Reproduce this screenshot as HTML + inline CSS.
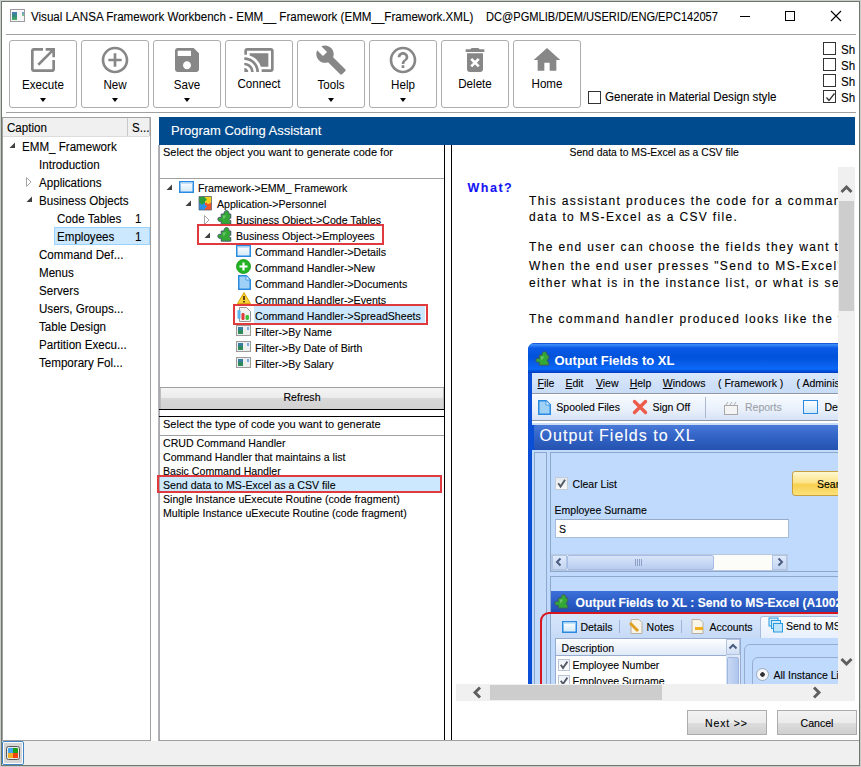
<!DOCTYPE html>
<html><head><meta charset="utf-8">
<style>
*{box-sizing:border-box;margin:0;padding:0}
html,body{width:861px;height:767px;overflow:hidden;background:#fff}
body{position:relative;font-family:"Liberation Sans",sans-serif;color:#000}
.a{position:absolute}
.t{position:absolute;white-space:nowrap;line-height:1;-webkit-text-stroke-width:0.1px}
.s{font-size:12.3px;transform:scaleX(0.943);transform-origin:0 0;margin-top:0px}
.m{font-size:10.6px}
.hl{position:absolute;height:1px}
.vl{position:absolute;width:1px}
.btn{position:absolute;top:40px;width:68px;height:68px;border:1px solid #adadad;border-radius:3px;background:#fff}
.btn .lb{position:absolute;left:0;right:0;text-align:center;font-size:12.3px;line-height:1;transform:scaleX(0.943);margin-top:0px}
.btn .ar{position:absolute;left:29.5px;top:57px;width:0;height:0;border-left:3.5px solid transparent;border-right:3.5px solid transparent;border-top:4px solid #000}
.btn svg{position:absolute;left:17px;top:2.7px}
.cb{position:absolute;width:13px;height:13px;border:1px solid #333;background:#fff}
.tri{position:absolute}
</style></head><body>

<!-- window frame -->
<div class="a" style="left:0;top:0;width:861px;height:767px;border:1px solid #cbcbcb"></div>
<div class="a" style="left:1px;top:1px;width:859px;height:765px;border:1px solid #6c7a6e"></div>

<!-- title bar -->
<div class="a" style="left:10px;top:9px;width:15px;height:13px;border:1px solid #9c9ca0;background:#f6f6f6">
  <div class="a" style="left:1px;top:2px;width:5px;height:8px;background:linear-gradient(#4a7cc0,#2f8a7a 50%,#4cb060)"></div>
  <div class="a" style="left:11px;top:2px;width:2px;height:4px;background:linear-gradient(#6a9ad8,#7cc87c)"></div>
</div>
<div class="t s" style="left:31px;top:11px">Visual LANSA Framework Workbench - EMM__ Framework (EMM__Framework.XML)</div>
<div class="t" style="left:486px;top:11px;font-size:12.3px;transform:scaleX(0.902);transform-origin:0 0">DC@PGMLIB/DEM/USERID/ENG/EPC142057</div>
<div class="hl" style="left:740px;top:16px;width:10px;background:#000"></div>
<div class="a" style="left:785px;top:11px;width:10px;height:10px;border:1px solid #000"></div>
<svg class="a" style="left:830px;top:10px" width="12" height="12" viewBox="0 0 12 12"><path d="M1 1L11 11M11 1L1 11" stroke="#000" stroke-width="1.1" fill="none"/></svg>
<div class="hl" style="left:6px;top:34px;width:850px;background:#a0a0a0"></div>

<!-- toolbar buttons -->
<div class="btn" style="left:9px"><svg width="32" height="32" viewBox="0 0 24 24"><path fill="#878787" d="M19 19H5V5h7V3H5c-1.11 0-2 .9-2 2v14c0 1.1.89 2 2 2h14c1.1 0 2-.9 2-2v-7h-2v7zM14 3v2h3.59l-9.83 9.830 1.41 1.41L19 6.41V10h2V3h-7z"/></svg><div class="lb" style="top:38px">Execute</div><div class="ar"></div></div>
<div class="btn" style="left:81px"><svg width="32" height="32" viewBox="0 0 24 24"><path fill="#878787" d="M13 7h-2v4H7v2h4v4h2v-4h4v-2h-4V7zm-1-5C6.48 2 2 6.480 2 12s4.48 10 10 10 10-4.48 10-10S17.52 2 12 2zm0 18c-4.41 0-8-3.59-8-8s3.59-8 8-8 8 3.59 8 8-3.59 8-8 8z"/></svg><div class="lb" style="top:38px">New</div><div class="ar"></div></div>
<div class="btn" style="left:153px"><svg width="32" height="32" viewBox="0 0 24 24"><path fill="#878787" d="M17 3H5c-1.11 0-2 .9-2 2v14c0 1.1.89 2 2 2h14c1.1 0 2-.9 2-2V7l-4-4zm-5 16c-1.66 0-3-1.34-3-3s1.34-3 3-3 3 1.34 3 3-1.34 3-3 3zm3-10H5V5h10v4z"/></svg><div class="lb" style="top:38px">Save</div><div class="ar"></div></div>
<div class="btn" style="left:225px"><svg width="32" height="32" viewBox="0 0 24 24"><path fill="#878787" d="M1 18v3h3c0-1.66-1.34-3-3-3zm0-4v2c2.76 0 5 2.24 5 5h2c0-3.87-3.13-7-7-7zm18-7H5v1.63c3.96 1.28 7.09 4.410 8.37 8.37H19V7zM1 10v2c4.97 0 9 4.03 9 9h2c0-6.08-4.93-11-11-11zm20-7H3c-1.1 0-2 .9-2 2v3h2V5h18v14h-7v2h7c1.1 0 2-.9 2-2V5c0-1.1-.9-2-2-2z"/></svg><div class="lb" style="top:36.5px">Connect</div></div>
<div class="btn" style="left:297px"><svg width="32" height="32" viewBox="0 0 24 24"><path fill="#878787" d="M22.7 19l-9.1-9.1c.9-2.3.4-5-1.5-6.9-2-2-5-2.4-7.4-1.3L9 6 6 9 1.6 4.7C.4 7.1.9 10.1 2.9 12.1c1.9 1.9 4.6 2.4 6.9 1.5l9.1 9.1c.4.4 1 .4 1.4 0l2.3-2.3c.5-.4.5-1.1.1-1.4z"/></svg><div class="lb" style="top:38px">Tools</div><div class="ar"></div></div>
<div class="btn" style="left:369px"><svg width="32" height="32" viewBox="0 0 24 24"><path fill="#878787" d="M11 18h2v-2h-2v2zm1-16C6.48 2 2 6.48 2 12s4.48 10 10 10 10-4.48 10-10S17.52 2 12 2zm0 18c-4.41 0-8-3.59-8-8s3.59-8 8-8 8 3.59 8 8-3.59 8-8 8zm0-14c-2.21 0-4 1.79-4 4h2c0-1.1.9-2 2-2s2 .9 2 2c0 2-3 1.75-3 5h2c0-2.25 3-2.5 3-5 0-2.21-1.79-4-4-4z"/></svg><div class="lb" style="top:38px">Help</div><div class="ar"></div></div>
<div class="btn" style="left:441px"><svg width="32" height="32" viewBox="0 0 24 24"><path fill="#878787" d="M6 19c0 1.1.9 2 2 2h8c1.1 0 2-.9 2-2V7H6v12zm2.46-7.12l1.41-1.41L12 12.59l2.12-2.12 1.41 1.41L13.41 14l2.12 2.12-1.41 1.41L12 15.41l-2.12 2.12-1.41-1.41L10.59 14l-2.13-2.12zM15.5 4l-1-1h-5l-1 1H5v2h14V4z"/></svg><div class="lb" style="top:36.5px">Delete</div></div>
<div class="btn" style="left:513px"><svg width="32" height="32" viewBox="0 0 24 24"><path fill="#878787" d="M10 20v-6h4v6h5v-8h3L12 3 2 12h3v8z"/></svg><div class="lb" style="top:36.5px">Home</div></div>

<div class="hl" style="left:6px;top:112px;width:850px;background:#a0a0a0"></div>

<!-- material checkbox + right checkboxes -->
<div class="cb" style="left:588px;top:91px"></div>
<div class="t s" style="left:605px;top:91px">Generate in Material Design style</div>
<div class="cb" style="left:823px;top:42px"></div><div class="t s" style="left:841px;top:44px">Sh</div>
<div class="cb" style="left:823px;top:58px"></div><div class="t s" style="left:841px;top:60px">Sh</div>
<div class="cb" style="left:823px;top:74px"></div><div class="t s" style="left:841px;top:76px">Sh</div>
<div class="cb" style="left:823px;top:90px"><svg class="a" style="left:1px;top:1px" width="11" height="11" viewBox="0 0 11 11"><path d="M1.5 5.5L4 8.5L9.5 1.5" stroke="#333" stroke-width="1.3" fill="none"/></svg></div><div class="t s" style="left:841px;top:92px">Sh</div>

<!-- left panel -->
<div class="a" style="left:2px;top:117px;width:149px;height:624px;border:1px solid #a0a0a0;border-right-color:#a0a0a0;background:#fff"></div>
<div class="a" style="left:3px;top:118px;width:146px;height:19px;background:#f0f0f0;border-bottom:1px solid #dcdcdc"></div>
<div class="vl" style="left:127px;top:118px;height:18px;background:#c8c8c8"></div>
<div class="vl" style="left:149px;top:118px;height:18px;background:#c8c8c8"></div>
<div class="t s" style="left:7px;top:122px">Caption</div>
<div class="t s" style="left:132px;top:122px">S...</div>
<div class="a" style="left:54px;top:227px;width:96px;height:18px;background:#cce8ff;border:1px solid #99d1ff"></div>
<svg class="a" style="left:9px;top:142px" width="7" height="7" viewBox="0 0 7 7"><path d="M6 0.5V6H0.5Z" fill="#404040"/></svg>
<div class="t s" style="left:22px;top:141px">EMM_ Framework</div>
<div class="t s" style="left:39px;top:159px">Introduction</div>
<svg class="a" style="left:26px;top:177px" width="6" height="10" viewBox="0 0 6 10"><path d="M0.5 0.5L5 5L0.5 9.5Z" fill="none" stroke="#a6a6a6"/></svg>
<div class="t s" style="left:39px;top:177px">Applications</div>
<svg class="a" style="left:26px;top:196px" width="7" height="7" viewBox="0 0 7 7"><path d="M6 0.5V6H0.5Z" fill="#404040"/></svg>
<div class="t s" style="left:39px;top:195px">Business Objects</div>
<div class="t s" style="left:57px;top:213px">Code Tables</div>
<div class="t s" style="left:135px;top:213px">1</div>
<div class="t s" style="left:57px;top:231px">Employees</div>
<div class="t s" style="left:135px;top:231px">1</div>
<div class="t s" style="left:39px;top:249px">Command Def...</div>
<div class="t s" style="left:39px;top:267px">Menus</div>
<div class="t s" style="left:39px;top:285px">Servers</div>
<div class="t s" style="left:39px;top:303px">Users, Groups...</div>
<div class="t s" style="left:39px;top:321px">Table Design</div>
<div class="t s" style="left:39px;top:339px">Partition Execu...</div>
<div class="t s" style="left:39px;top:357px">Temporary Fol...</div>

<!-- status bar -->
<div class="a" style="left:2px;top:741px;width:857px;height:24px;background:#f0f0f0"></div>
<div class="a" style="left:2px;top:741px;width:22px;height:24px;border:1.5px solid #3f84c6;border-radius:2px;background:#fff"></div>
<div class="a" style="left:4px;top:743px;width:18px;height:20px;background:#d6d6d6"></div>
<div class="a" style="left:6px;top:746px;width:14px;height:14px;border:1.5px solid #5a5a5a;border-radius:2.5px;background:#e8e8e8"></div>
<div class="a" style="left:8px;top:748px;width:5px;height:5px;background:#3ea6f4;border-radius:1px 0 0 0"></div>
<div class="a" style="left:13px;top:748px;width:5px;height:5px;background:#1ca01c;border-radius:0 1px 0 0"></div>
<div class="a" style="left:8px;top:753px;width:5px;height:5px;background:#f2b02a"></div>
<div class="a" style="left:13px;top:753px;width:5px;height:5px;background:#f2440e"></div>

<!-- blue header -->
<div class="a" style="left:159px;top:117px;width:696px;height:28px;background:#004b8e"></div>
<div class="t" style="left:171px;top:124px;font-size:13px;color:#fff">Program Coding Assistant</div>

<!-- middle panel -->
<div class="vl" style="left:159px;top:145px;height:595px;background:#a8a8ae"></div><div class="vl" style="left:158px;top:145px;height:595px;background:#b4b4b8"></div>
<div class="t" style="left:163px;top:147.2px;font-size:11px">Select the object you want to generate code for</div>
<div class="hl" style="left:159px;top:178px;width:286px;background:#a0a0a0"></div>
<svg width="0" height="0" style="position:absolute"><defs>
<linearGradient id="gwin" x1="0" y1="0" x2="0" y2="1"><stop offset="0" stop-color="#ffffff"/><stop offset="1" stop-color="#cfe8fa"/></linearGradient>
<symbol id="iwin" viewBox="0 0 15 12"><rect x="0.75" y="0.75" width="13.5" height="10.5" fill="url(#gwin)" stroke="#2a8ae0" stroke-width="1.5"/><rect x="1.5" y="1.5" width="12" height="1.5" fill="#bfe0f8"/></symbol>
<symbol id="ipuz" viewBox="0 0 15 15"><path d="M7 4C7 1.5 8.2.6 9.5.6S12 1.5 12 4H13.8V8.4C13.3 7.9 12.2 8 12.2 9.4S13.3 10.9 13.8 10.4V14.2H4.2V11C3.8 11.6 1 11.8.8 9.3C.6 7.3 3.2 6.8 4.2 7.8V4Z" fill="#34a834" stroke="#41506a" stroke-width="0.9"/><path d="M5.5 5.5h4l-3 4z" fill="#7ed27e" opacity="0.7"/></symbol>
<symbol id="iapp" viewBox="0 0 15 16"><path d="M1 1.5h6v6.5H1z" fill="#2e9e36"/><path d="M7 1h6.5v6.5H7z" fill="#f6d21c"/><path d="M1 8h6v7H1z" fill="#2a90ea"/><path d="M7 7.5h6.5V15H7z" fill="#f2542a"/><circle cx="7" cy="4.5" r="1.6" fill="#2e9e36"/><circle cx="10.3" cy="7.5" r="1.6" fill="#f6d21c"/><circle cx="4" cy="8" r="1.6" fill="#2e9e36"/><circle cx="7" cy="11.5" r="1.6" fill="#2a90ea"/><path d="M1 1.5h12.5V15H1z" fill="none" stroke="#5a6478" stroke-width="0.8" stroke-linejoin="round"/></symbol>
<symbol id="iplus" viewBox="0 0 15 15"><circle cx="7.5" cy="7.5" r="7" fill="#22b422" stroke="#179017" stroke-width="0.8"/><path d="M7.5 3.5v8M3.5 7.5h8" stroke="#fff" stroke-width="2.2"/></symbol>
<symbol id="idoc" viewBox="0 0 13 15"><path d="M0.75 0.75h7.5l4 4v9.5H0.75z" fill="#9fd0f6" stroke="#2a8ae0" stroke-width="1.5"/><path d="M8 1v4h4" fill="#e6f4fe" stroke="#2a8ae0" stroke-width="0.8"/></symbol>
<symbol id="iwarn" viewBox="0 0 14 12"><path d="M7 0.6L13.5 11.5H0.5z" fill="#f8d23a" stroke="#d9a000" stroke-width="0.9"/><path d="M7 4v4" stroke="#402000" stroke-width="1.6"/><rect x="6.2" y="9" width="1.6" height="1.5" fill="#402000"/></symbol>
<symbol id="isheet" viewBox="0 0 14 15"><path d="M2.5 .5h7l4 4v10h-11z" fill="#f2f2f2" stroke="#8a8a8a" stroke-width="0.9"/><rect x="0.5" y="3" width="3" height="9" rx="1.2" fill="#5ab4f0"/><rect x="4.5" y="6" width="3" height="7" rx="1.2" fill="#e03a3a"/><rect x="8.5" y="8" width="3.5" height="5" rx="1.4" fill="#3cc03c"/></symbol>
<symbol id="ifil" viewBox="0 0 15 11"><rect x="0.5" y="0.5" width="14" height="10" fill="#eeeeee" stroke="#9a9a9a"/><rect x="2" y="2" width="5" height="7" fill="#2f8a5a"/><rect x="2" y="2" width="5" height="3" fill="#3a78b8" opacity="0.8"/><rect x="11" y="2" width="2" height="3" fill="#7ab0e0"/></symbol>
</defs></svg>
<div class="a" style="left:254px;top:306px;width:171px;height:17px;background:#cce8ff"></div>
<svg class="a" style="left:166px;top:184px" width="7" height="7" viewBox="0 0 7 7"><path d="M6 0.5V6H0.5Z" fill="#404040"/></svg>
<svg class="a" style="left:179px;top:181px" width="15" height="12"><use href="#iwin"/></svg>
<div class="t m" style="left:198px;top:182.7px">Framework-&gt;EMM_ Framework</div>
<svg class="a" style="left:185px;top:200px" width="7" height="7" viewBox="0 0 7 7"><path d="M6 0.5V6H0.5Z" fill="#404040"/></svg>
<svg class="a" style="left:198px;top:195px" width="15" height="16"><use href="#iapp"/></svg>
<div class="t m" style="left:217px;top:198.7px">Application-&gt;Personnel</div>
<svg class="a" style="left:204px;top:215px" width="6" height="10" viewBox="0 0 6 10"><path d="M0.5 0.5L5 5L0.5 9.5Z" fill="none" stroke="#a6a6a6"/></svg>
<svg class="a" style="left:217px;top:210px" width="15" height="15"><use href="#ipuz"/></svg>
<div class="t m" style="left:236px;top:214.7px">Business Object-&gt;Code Tables</div>
<svg class="a" style="left:204px;top:232px" width="7" height="7" viewBox="0 0 7 7"><path d="M6 0.5V6H0.5Z" fill="#404040"/></svg>
<svg class="a" style="left:217px;top:227px" width="15" height="15"><use href="#ipuz"/></svg>
<div class="t m" style="left:236px;top:230.7px">Business Object-&gt;Employees</div>
<svg class="a" style="left:236px;top:245px" width="15" height="12"><use href="#iwin"/></svg>
<div class="t m" style="left:255px;top:246.7px">Command Handler-&gt;Details</div>
<svg class="a" style="left:236px;top:259px" width="15" height="15"><use href="#iplus"/></svg>
<div class="t m" style="left:255px;top:262.7px">Command Handler-&gt;New</div>
<svg class="a" style="left:238px;top:275px" width="13" height="15"><use href="#idoc"/></svg>
<div class="t m" style="left:255px;top:278.7px">Command Handler-&gt;Documents</div>
<svg class="a" style="left:237px;top:292px" width="14" height="12"><use href="#iwarn"/></svg>
<div class="t m" style="left:255px;top:294.7px">Command Handler-&gt;Events</div>
<svg class="a" style="left:237px;top:307px" width="14" height="15"><use href="#isheet"/></svg>
<div class="t m" style="left:255px;top:310.7px">Command Handler-&gt;SpreadSheets</div>
<svg class="a" style="left:236px;top:325px" width="15" height="11"><use href="#ifil"/></svg>
<div class="t m" style="left:255px;top:326.7px">Filter-&gt;By Name</div>
<svg class="a" style="left:236px;top:341px" width="15" height="11"><use href="#ifil"/></svg>
<div class="t m" style="left:255px;top:342.7px">Filter-&gt;By Date of Birth</div>
<svg class="a" style="left:236px;top:357px" width="15" height="11"><use href="#ifil"/></svg>
<div class="t m" style="left:255px;top:358.7px">Filter-&gt;By Salary</div>
<div class="a" style="left:197px;top:224px;width:187px;height:21px;border:2px solid #e0393e"></div>
<div class="a" style="left:233px;top:304px;width:195px;height:21px;border:2px solid #e0393e"></div>
<div class="hl" style="left:159px;top:387px;width:286px;background:#a0a0a0"></div>
<div class="a" style="left:160px;top:388px;width:284px;height:21px;background:linear-gradient(#f4f4f4 0%,#ececec 45%,#d8d8d8 50%,#d2d2d2 100%);border-left:1px solid #bdbdbd;border-right:1px solid #bdbdbd"></div>
<div class="t m" style="left:160px;top:392px;width:284px;text-align:center">Refresh</div>
<div class="hl" style="left:159px;top:409px;width:286px;background:#000"></div>
<div class="hl" style="left:159px;top:416px;width:286px;background:#000"></div>
<div class="t" style="left:163px;top:419.1px;font-size:11px">Select the type of code you want to generate</div>
<div class="hl" style="left:159px;top:435px;width:286px;background:#a0a0a0"></div>
<div class="a" style="left:160px;top:477px;width:281px;height:14px;background:#cce8ff"></div>
<div class="t m" style="left:163px;top:437.7px">CRUD Command Handler</div>
<div class="t m" style="left:163px;top:451.7px">Command Handler that maintains a list</div>
<div class="t m" style="left:163px;top:465.7px">Basic Command Handler</div>
<div class="t m" style="left:163px;top:479.7px">Send data to MS-Excel as a CSV file</div>
<div class="t m" style="left:163px;top:493.7px">Single Instance uExecute Routine (code fragment)</div>
<div class="t m" style="left:163px;top:507.7px">Multiple Instance uExecute Routine (code fragment)</div>
<div class="a" style="left:157px;top:475px;width:285px;height:18px;border:2px solid #e0393e"></div>
<div class="vl" style="left:444px;top:145px;height:595px;background:#000"></div>
<div class="vl" style="left:451px;top:145px;height:595px;background:#000"></div>
<div class="hl" style="left:158px;top:740px;width:701px;background:#a0a0a0"></div>

<!-- right panel -->

<div class="t" style="left:569.5px;top:147.7px;font-size:10.4px">Send data to MS-Excel as a CSV file</div>
<div class="t" style="left:467.5px;top:182.2px;font-size:12.5px;font-weight:bold;letter-spacing:1.5px;color:#1414f4">What?</div>
<div class="a" style="left:452px;top:160px;width:386px;height:524px;overflow:hidden">
<div class="a" style="left:-452px;top:-160px;width:861px;height:767px">
<div class="t" style="left:529px;top:195.1px;font-size:12px;letter-spacing:1.35px;-webkit-text-stroke-width:0.12px">This assistant produces the code for a command handler that sends</div>
<div class="t" style="left:529px;top:210.6px;font-size:12px;letter-spacing:1.35px;-webkit-text-stroke-width:0.12px">data to MS-Excel as a CSV file.</div>
<div class="t" style="left:529px;top:241.1px;font-size:12px;letter-spacing:1.35px;-webkit-text-stroke-width:0.12px">The end user can choose the fields they want to appear.</div>
<div class="t" style="left:529px;top:260.4px;font-size:12px;letter-spacing:1.35px;-webkit-text-stroke-width:0.12px">When the end user presses &quot;Send to MS-Excel&quot; they can</div>
<div class="t" style="left:529px;top:277.2px;font-size:12px;letter-spacing:1.35px;-webkit-text-stroke-width:0.12px">either what is in the instance list, or what is selected.</div>
<div class="t" style="left:529px;top:312.7px;font-size:12px;letter-spacing:1.35px;-webkit-text-stroke-width:0.12px">The command handler produced looks like the following.</div>

<div class="a" style="left:528px;top:343px;width:340px;height:341px;overflow:hidden">
<div class="a" style="left:-528px;top:-343px;width:861px;height:767px">
<!-- frame bg -->
<div class="a" style="left:528px;top:343px;width:330px;height:341px;background:#0a4fd6;border-top-left-radius:7px"></div>
<div class="a" style="left:528px;top:343px;width:330px;height:30px;border-top-left-radius:6px;background:linear-gradient(#0a44cc 0px,#3a8af8 1.5px,#2a78f0 3px,#0a5ae6 5px,#0052da 14px,#0a60ee 22px,#0a6af8 26px,#0050dc 28px,#003cb8 30px)"></div>
<svg class="a" style="left:535px;top:351px" width="15" height="15"><use href="#ipuz"/></svg>
<div class="t" style="left:554.5px;top:353.8px;font-size:13px;color:#fff;font-weight:bold;-webkit-text-stroke-width:0">Output Fields to XL</div>
<!-- menu bar -->
<div class="a" style="left:532px;top:373px;width:320px;height:20px;background:linear-gradient(#d8e7fb,#c8dcf6)"></div>
<div class="t" style="left:537.5px;top:377.8px;font-size:10.5px;color:#000"><u>F</u>ile</div><div class="t" style="left:565.4px;top:377.8px;font-size:10.5px;color:#000"><u>E</u>dit</div><div class="t" style="left:595.9px;top:377.8px;font-size:10.5px;color:#000"><u>V</u>iew</div><div class="t" style="left:629.7px;top:377.8px;font-size:10.5px;color:#000"><u>H</u>elp</div><div class="t" style="left:662.8px;top:377.8px;font-size:10.5px;color:#000"><u>W</u>indows</div><div class="t" style="left:718px;top:377.8px;font-size:10.5px;color:#000">( Framework )</div><div class="t" style="left:796.6px;top:377.8px;font-size:10.5px;color:#000">( Administration )</div>
<div class="hl" style="left:532px;top:393px;width:320px;background:#8c96a6"></div>
<div class="hl" style="left:532px;top:394px;width:320px;background:#ffffff"></div>
<div class="a" style="left:532px;top:395px;width:320px;height:25px;background:linear-gradient(#f7faff,#e9f0fb 60%,#d6e2f5)"></div>
<div class="hl" style="left:532px;top:420px;width:320px;background:#8c96a6"></div>
<div class="a" style="left:532px;top:421px;width:320px;height:4px;background:linear-gradient(#ffffff 0,#ffffff 2px,#c8dcf8 2px)"></div>
<svg class="a" style="left:538px;top:400px" width="13" height="15"><use href="#idoc"/></svg>
<svg class="a" style="left:632px;top:399px" width="16" height="16" viewBox="0 0 16 16"><path d="M2.5 2.5L13.5 13.5M13.5 2.5L2.5 13.5" stroke="#ec5c4a" stroke-width="3.4" stroke-linecap="round"/></svg>
<div class="vl" style="left:705px;top:397px;height:21px;background:#a9b8d0"></div>
<svg class="a" style="left:723px;top:401px" width="16" height="14" viewBox="0 0 16 14"><rect x="1.5" y="4.5" width="13" height="9" fill="#f4f4f4" stroke="#a8a8a8"/><path d="M3 4l2-3M7 4l2-3M11 4l2-3" stroke="#b0b0b0"/></svg>
<div class="a" style="left:803px;top:400px;width:15px;height:14px;border:1.5px solid #2a8ae0;background:linear-gradient(#fff,#cfe8fa)"></div>
<div class="t" style="left:556.3px;top:401.9px;font-size:10.5px;">Spooled Files</div><div class="t" style="left:652.4px;top:401.6px;font-size:10.5px;">Sign Off</div><div class="t" style="left:745px;top:401.6px;font-size:10.5px;color:#9aa0a8">Reports</div><div class="t" style="left:824.5px;top:401.6px;font-size:10.5px;">Details</div>
<!-- big header -->
<div class="a" style="left:534px;top:425px;width:320px;height:25px;border-radius:2px 0 0 2px;background:linear-gradient(#4a7ad8 0%,#3466c8 40%,#2452b0 100%)"></div>
<div class="t" style="left:539.6px;top:428.3px;font-size:16px;color:#fff;letter-spacing:1px;-webkit-text-stroke-width:0.1px">Output Fields to XL</div>
<!-- content -->
<div class="a" style="left:532px;top:450px;width:320px;height:240px;background:#bfdafd"></div>
<div class="a" style="left:534px;top:452px;width:13px;height:240px;border:1px solid #8ea8cc;border-bottom:none;background:#c4dcfa"></div>
<div class="a" style="left:550px;top:452px;width:300px;height:120px;border:1px solid #8ea8cc;border-right:none"></div>
<div class="a" style="left:550px;top:576px;width:300px;height:120px;border:1px solid #8ea8cc;border-right:none"></div>
<div class="a" style="left:555px;top:477px;width:13px;height:13px;border:1px solid #c4ccd6;background:linear-gradient(#e4e8ee,#f8f8f8)"></div>
<svg class="a" style="left:556px;top:478px" width="11" height="11" viewBox="0 0 11 11"><path d="M2.2 5.2L4.6 8.6L9 1.8" stroke="#545c68" stroke-width="1.9" fill="none"/></svg>
<div class="t" style="left:572.6px;top:478.9px;font-size:10.5px;">Clear List</div><div class="t" style="left:554.6px;top:505.0px;font-size:10.5px;">Employee Surname</div>
<div class="a" style="left:555px;top:519px;width:234px;height:19px;background:#fff;border:1px solid #a8bcd8;border-top-color:#98acc8"></div>
<div class="t" style="left:559px;top:524.1px;font-size:10.5px;">S</div>
<div class="a" style="left:792px;top:471px;width:60px;height:25px;border:1px solid #c8a040;border-radius:3px;background:linear-gradient(#fff8d0 0%,#fce48a 45%,#f8d050 55%,#fbe27a 100%)"></div>
<div class="t" style="left:817px;top:479.1px;font-size:10.5px;">Search</div>
<!-- h scrollbar in embed -->
<div class="a" style="left:551px;top:554px;width:237px;height:17px;background:#fcfcf8;border:1px solid #b8c8e0"></div>
<div class="a" style="left:552px;top:555px;width:15px;height:15px;background:linear-gradient(#e0eafa,#c4d6f2);border:1px solid #b0c4e4"></div>
<svg class="a" style="left:554px;top:557px" width="10" height="10" viewBox="0 0 10 10"><path d="M6.5 1.5L3 5L6.5 8.5" stroke="#4a5c80" stroke-width="2" fill="none"/></svg>
<div class="a" style="left:567px;top:555px;width:147px;height:15px;border-radius:2px;background:linear-gradient(#d8e4fa,#b8ccf0);border:1px solid #a8bce8"></div>
<div class="a" style="left:635px;top:559px;width:8px;height:7px;background:repeating-linear-gradient(90deg,#8ca0c8 0 1px,transparent 1px 2px)"></div>
<div class="a" style="left:772px;top:555px;width:15px;height:15px;background:linear-gradient(#e0eafa,#c4d6f2);border:1px solid #b0c4e4"></div>
<svg class="a" style="left:775px;top:557px" width="10" height="10" viewBox="0 0 10 10"><path d="M3.5 1.5L7 5L3.5 8.5" stroke="#4a5c80" stroke-width="2" fill="none"/></svg>
<!-- header bar 2 -->
<div class="a" style="left:551px;top:591px;width:300px;height:21px;background:linear-gradient(#3c70d8 0%,#2a5ac4 60%,#1f4eb4 100%)"></div>
<svg class="a" style="left:554px;top:594px" width="15" height="15"><use href="#ipuz"/></svg>
<div class="t" style="left:575.6px;top:596.8px;font-size:12.1px;color:#fff;font-weight:bold;letter-spacing:0px">Output Fields to XL : Send to MS-Excel (A1002)</div>
<!-- red outline -->
<div class="a" style="left:540px;top:612px;width:320px;height:90px;border-top:2px solid #d8141e;border-left:2px solid #d8141e;border-top-left-radius:9px"></div>
<!-- tabs -->
<div class="a" style="left:551px;top:614px;width:300px;height:24px;background:linear-gradient(#d8e6fa,#c6daf6)"></div>
<svg class="a" style="left:562px;top:621px" width="15" height="12"><use href="#iwin"/></svg>
<div class="vl" style="left:619px;top:620px;height:13px;background:#9fb4d8"></div>
<svg class="a" style="left:629px;top:619px" width="14" height="15" viewBox="0 0 14 15"><path d="M2 .5h8l3 3v11H2z" fill="#f8f4e8" stroke="#b8b0a0"/><path d="M1 4l8 8" stroke="#e0a020" stroke-width="3"/></svg>
<div class="vl" style="left:681px;top:620px;height:13px;background:#9fb4d8"></div>
<svg class="a" style="left:691px;top:619px" width="13" height="15" viewBox="0 0 13 15"><path d="M1 .5h8l3 3v11H1z" fill="#f8f4e8" stroke="#b8b0a0"/><rect x="4" y="8" width="8" height="3" fill="#f0b020"/></svg>
<div class="a" style="left:760px;top:616px;width:100px;height:22px;background:linear-gradient(#f8fbff,#e8f0fc);border:1px solid #a8bce0;border-bottom:none;border-radius:3px 3px 0 0"></div>
<svg class="a" style="left:768px;top:617px" width="15" height="16" viewBox="0 0 15 16"><rect x="1" y="1" width="9" height="8" fill="#d0ecfc" stroke="#2a9ae0"/><rect x="3.5" y="3.5" width="9" height="8" fill="#d0ecfc" stroke="#2a9ae0"/><rect x="5.5" y="6.5" width="9" height="8.5" fill="#bfe4fb" stroke="#2a9ae0"/></svg>
<div class="t" style="left:580.4px;top:622.1px;font-size:10.5px;">Details</div><div class="t" style="left:646.6px;top:622.1px;font-size:10.5px;">Notes</div><div class="t" style="left:709.4px;top:622.1px;font-size:10.5px;">Accounts</div><div class="t" style="left:786px;top:621.1px;font-size:10.5px;">Send to MS-Excel</div>
<!-- grid -->
<div class="a" style="left:555px;top:638px;width:186px;height:60px;background:#fff;border:1px solid #98acd0"></div>
<div class="a" style="left:556px;top:639px;width:170px;height:17px;background:linear-gradient(#fdfeff,#dfe9f8);border-bottom:1px solid #98acd0"></div>
<div class="a" style="left:726px;top:639px;width:14px;height:60px;background:linear-gradient(90deg,#d4e0f4,#e6eefa)"></div>
<div class="a" style="left:726px;top:639px;width:14px;height:16px;background:linear-gradient(#f4f8fe,#d0def4);border:1px solid #b4c4e0"></div>
<svg class="a" style="left:728px;top:642px" width="10" height="10" viewBox="0 0 10 10"><path d="M1.5 6.5L5 3L8.5 6.5" stroke="#4a5c80" stroke-width="2" fill="none"/></svg>
<div class="a" style="left:727px;top:657px;width:12px;height:40px;border-radius:2px;background:linear-gradient(90deg,#c8d8f4,#b0c6ee);border:1px solid #a0b8e0"></div>
<div class="a" style="left:558px;top:659px;width:12px;height:12px;border:1px solid #b8c4d4;background:linear-gradient(#eef2f6,#fff)"></div>
<svg class="a" style="left:559px;top:660px" width="10" height="10" viewBox="0 0 10 10"><path d="M1.8 4.8L4 8L8.4 1.6" stroke="#545c68" stroke-width="1.9" fill="none"/></svg>
<div class="a" style="left:558px;top:675px;width:12px;height:12px;border:1px solid #b8c4d4;background:linear-gradient(#eef2f6,#fff)"></div>
<svg class="a" style="left:559px;top:676px" width="10" height="10" viewBox="0 0 10 10"><path d="M1.8 4.8L4 8L8.4 1.6" stroke="#545c68" stroke-width="1.9" fill="none"/></svg>
<div class="t" style="left:561.6px;top:643.1px;font-size:10.5px;">Description</div><div class="t" style="left:572.4px;top:660.1px;font-size:10.5px;">Employee Number</div><div class="t" style="left:572.4px;top:676.1px;font-size:10.5px;">Employee Surname</div>
<!-- right group -->
<div class="a" style="left:744px;top:644px;width:120px;height:60px;border:1px solid #98acd0;border-radius:6px;background:#bfdafd"></div>
<div class="a" style="left:752px;top:657px;width:110px;height:50px;border:1px solid #98acd0;border-radius:6px"></div>
<div class="a" style="left:756px;top:668px;width:13px;height:13px;border-radius:50%;border:1px solid #a0acbc;background:radial-gradient(#333 0 2px,#f4f6f8 2.5px)"></div>
<div class="t" style="left:773.5px;top:670.1px;font-size:10.5px;">All Instance List</div>
</div></div>

</div>
</div>
<!-- vertical scrollbar -->
<div class="a" style="left:838px;top:167px;width:17px;height:517px;background:#f0f0f0"></div>
<div class="a" style="left:839px;top:201px;width:15px;height:110px;background:#cdcdcd"></div>
<svg class="a" style="left:840px;top:184px" width="13" height="10" viewBox="0 0 13 10"><path d="M1.5 8L6.5 3L11.5 8" stroke="#5e5e5e" stroke-width="2.9" fill="none"/></svg>
<svg class="a" style="left:840px;top:657px" width="13" height="10" viewBox="0 0 13 10"><path d="M1.5 2L6.5 7L11.5 2" stroke="#5e5e5e" stroke-width="2.9" fill="none"/></svg>
<!-- horizontal scrollbar -->
<div class="a" style="left:456px;top:684px;width:399px;height:17px;background:#f0f0f0"></div>
<div class="a" style="left:490px;top:685px;width:172px;height:15px;background:#cdcdcd"></div>
<svg class="a" style="left:472px;top:686px" width="11" height="13" viewBox="0 0 11 13"><path d="M8 1.5L3 6.5L8 11.5" stroke="#5e5e5e" stroke-width="2.9" fill="none"/></svg>
<svg class="a" style="left:811px;top:686px" width="11" height="13" viewBox="0 0 11 13"><path d="M3 1.5L8 6.5L3 11.5" stroke="#5e5e5e" stroke-width="2.9" fill="none"/></svg>
<!-- buttons -->
<div class="a" style="left:687px;top:710px;width:80px;height:25px;border:1px solid #acacac;background:linear-gradient(#f2f2f2 0%,#ebebeb 50%,#dddddd 51%,#cfcfcf 100%)"></div>
<div class="t m" style="left:705px;top:718px;letter-spacing:0.8px">Next &gt;&gt;</div>
<div class="a" style="left:777px;top:710px;width:80px;height:25px;border:1px solid #acacac;background:linear-gradient(#f2f2f2 0%,#ebebeb 50%,#dddddd 51%,#cfcfcf 100%)"></div>
<div class="t m" style="left:777px;top:718px;width:80px;text-align:center">Cancel</div>


</body></html>
